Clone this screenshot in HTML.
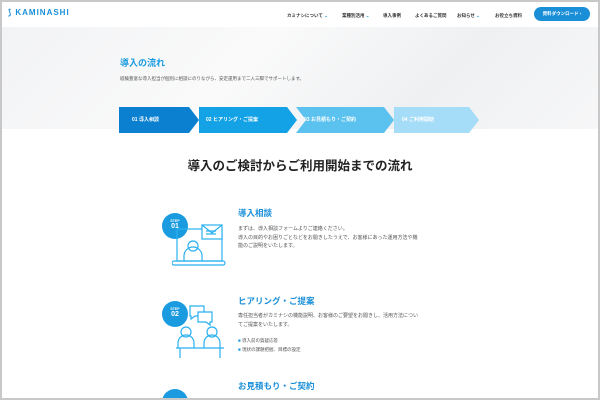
<!DOCTYPE html><html><head><meta charset="utf-8"><style>
*{margin:0;padding:0;box-sizing:border-box}
body{width:600px;height:400px;overflow:hidden;background:#c8c8c8;font-family:"Liberation Sans","Noto Sans CJK JP",sans-serif;position:relative}
.page{position:absolute;left:2px;top:2px;width:596px;height:396px;background:#fff;overflow:hidden}
.a{position:absolute;white-space:nowrap}
.nav{font-size:4.5px;color:#333;font-weight:bold}
.hero{position:absolute;left:0;top:25px;width:596px;height:102px;background:linear-gradient(135deg,#f2f3f5,#fafafa 40%,#eef0f2 70%,#f7f7f8)}
.seg{position:absolute;top:105px;height:26px;color:#fff;font-size:5px;font-weight:bold;line-height:26px;padding-left:14px}
.circ{position:absolute;width:26px;height:26px;border-radius:50%;background:#1a9be0;color:#fff;text-align:center;font-weight:bold}
.h{font-size:8.5px;color:#1a8fd8;font-weight:bold}
.p{font-size:5px;color:#555;line-height:8.5px}
</style></head><body><div class="page">
<div class="a" style="left:6px;top:6px;font-size:8px;color:#1a8fd8;font-weight:bold;letter-spacing:1px">⟆ KAMINASHI</div>
<div class="a nav" style="left:285px;top:11px">カミナシについて <span style="color:#1a9be0">⌄</span></div>
<div class="a nav" style="left:340px;top:11px">業種別活用 <span style="color:#1a9be0">⌄</span></div>
<div class="a nav" style="left:381px;top:11px">導入事例</div>
<div class="a nav" style="left:413px;top:11px">よくあるご質問</div>
<div class="a nav" style="left:455px;top:11px">お知らせ <span style="color:#1a9be0">⌄</span></div>
<div class="a nav" style="left:493px;top:11px">お役立ち資料</div>
<div class="a" style="left:532px;top:5px;width:56px;height:14px;border-radius:7px;background:#1a8fd8;color:#fff;font-size:4.5px;font-weight:bold;line-height:14px;text-align:center">資料ダウンロード ›</div>
<div class="hero"></div>
<div class="a" style="left:118px;top:54px;font-size:9px;color:#1a9be0;font-weight:bold">導入の流れ</div>
<div class="a" style="left:118px;top:74px;font-size:4.5px;color:#555">経験豊富な導入担当が個別に相談にのりながら、安定運用まで二人三脚でサポートします。</div>
<svg class="a" style="left:117px;top:105px" width="360" height="26">
<polygon points="275,0 350,0 360,13 350,26 275,26" fill="#a5dcf7"/>
<polygon points="177,0 265,0 275,13 265,26 177,26 187,13" fill="#5bc2f0" transform="translate(0,0)"/>
<polygon points="80,0 168,0 178,13 168,26 80,26" fill="#14a2e6"/>
<polygon points="0,0 70,0 80,13 70,26 0,26" fill="#0b80d0"/>
</svg>
<div class="a" style="left:130px;top:105px;color:#fff;font-size:5px;font-weight:bold;line-height:26px">01 導入相談</div>
<div class="a" style="left:204px;top:105px;color:#fff;font-size:5px;font-weight:bold;line-height:26px">02 ヒアリング・ご提案</div>
<div class="a" style="left:302px;top:105px;color:#fff;font-size:5px;font-weight:bold;line-height:26px">03 お見積もり・ご契約</div>
<div class="a" style="left:400px;top:105px;color:#fff;font-size:5px;font-weight:bold;line-height:26px">04 ご利用開始</div>
<div class="a" style="left:0;width:596px;text-align:center;top:153px;font-size:12.5px;font-weight:bold;color:#222">導入のご検討からご利用開始までの流れ</div>
<div class="circ" style="left:160px;top:211px"><div style="font-size:3.5px;margin-top:6px">STEP</div><div style="font-size:7px">01</div></div>
<svg class="a" style="left:170px;top:217px" width="55" height="50" fill="none" stroke="#2bb0f0" stroke-width="1.2"><rect x="5" y="10" width="45" height="32"/><rect x="0" y="42" width="53" height="4" rx="2"/><circle cx="21" cy="27" r="5"/><path d="M12 42v-5a9 9 0 0 1 18 0v5"/><rect x="30" y="6" width="20" height="14" fill="#fff"/><path d="M30 6l10 8 10-8"/><path d="M34 12h10M34 15h10"/></svg>
<div class="a h" style="left:236px;top:205px">導入相談</div>
<div class="a p" style="left:236px;top:223px">まずは、導入相談フォームよりご連絡ください。<br>導入の目的やお困りごとなどをお聞きしたうえで、お客様にあった運用方法や機<br>能のご説明をいたします。</div>
<div class="circ" style="left:160px;top:299px"><div style="font-size:3.5px;margin-top:6px">STEP</div><div style="font-size:7px">02</div></div>
<svg class="a" style="left:174px;top:302px" width="52" height="55" fill="none" stroke="#2bb0f0" stroke-width="1.2"><path d="M14 2h14v10h-9l-4 3v-3h-1z"/><path d="M22 8h14v10h-2v3l-4-3h-8z" fill="#fff"/><circle cx="10" cy="28" r="5"/><circle cx="36" cy="28" r="5"/><path d="M2 44v-5a8 8 0 0 1 16 0v5M28 44v-5a8 8 0 0 1 16 0v5"/><path d="M0 44h48M4 44v10M44 44v10"/></svg>
<div class="a h" style="left:236px;top:293px">ヒアリング・ご提案</div>
<div class="a p" style="left:236px;top:310px">専任担当者がカミナシの機能説明、お客様のご要望をお聞きし、活用方法につい<br>てご提案をいたします。</div>
<div class="a p" style="left:236px;top:335px;font-size:4.5px"><span style="color:#1a9be0">■</span> 導入前の質疑応答</div>
<div class="a p" style="left:236px;top:344px;font-size:4.5px"><span style="color:#1a9be0">■</span> 現状の課題把握、目標の設定</div>
<div class="circ" style="left:160px;top:387px"></div>
<div class="a h" style="left:236px;top:378px">お見積もり・ご契約</div>
</div></body></html>
